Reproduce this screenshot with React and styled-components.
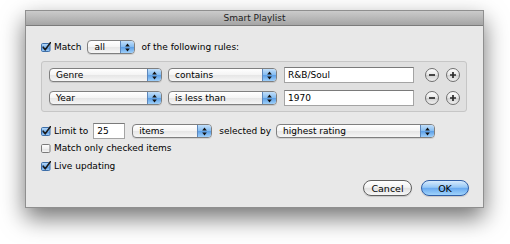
import styled, { createGlobalStyle } from "styled-components";

const GlobalStyle = createGlobalStyle`
  html, body {
    margin: 0;
    background: #fff;
  }
  body {
    font-family: "DejaVu Sans", "Liberation Sans", sans-serif;
    font-size: 9px;
    color: #000;
  }
`;

const Page = styled.div`
  width: 510px;
  height: 244px;
  padding: 10px 0 0 25px;
  box-sizing: border-box;
  overflow: hidden;
`;

const Window = styled.div`
  width: 459px;
  height: 198px;
  box-sizing: border-box;
  display: flex;
  flex-direction: column;
  background: #e8e8e8;
  border: 1px solid #8f8f8f;
  box-shadow: 0 10px 22px rgba(0, 0, 0, 0.55);
`;

const TitleBar = styled.div`
  height: 14px;
  flex: none;
  display: flex;
  align-items: center;
  justify-content: center;
  background: linear-gradient(#cbcbcb, #a5a5a5);
  border-bottom: 1px solid #7b7b7b;
  color: #1e1e1e;
`;

const Body = styled.div`
  flex: 1;
  display: flex;
  flex-direction: column;
  padding: 14px 16px 0 15px;
`;

const Row = styled.div`
  display: flex;
  align-items: center;
  height: ${(p) => p.$h || 14}px;
  margin-top: ${(p) => p.$mt || 0}px;
`;

const Label = styled.span`
  margin-left: ${(p) => p.$ml || 0}px;
  white-space: nowrap;
`;

const RulesBox = styled.div`
  margin-top: 7px;
  display: flex;
  flex-direction: column;
  gap: 7px;
  padding: 5px 8px 5px 7px;
  background: #e0e0e0;
  border: 1px solid #c6c6c6;
  border-radius: 3px;
`;

const PopupBox = styled.div`
  width: ${(p) => p.$w}px;
  height: 14px;
  flex: none;
  margin-left: ${(p) => p.$ml || 0}px;
  box-sizing: border-box;
  display: flex;
  border: 1px solid #7f7f7f;
  border-radius: 4px;
  overflow: hidden;
  background: linear-gradient(#ffffff, #f4f4f4 50%, #e6e6e6 52%, #f6f6f6);
  box-shadow: 0 1px 0 rgba(0, 0, 0, 0.1);
`;

const PopupLabel = styled.span`
  flex: 1;
  padding-left: 6px;
  line-height: 12px;
  white-space: nowrap;
  overflow: hidden;
`;

const PopupArrows = styled.span`
  width: 13px;
  flex: none;
  display: flex;
  align-items: center;
  justify-content: center;
  border-left: 1px solid #5d87bb;
  background: linear-gradient(#c2dffa, #86bdf1 48%, #5c9fe6 52%, #9fd0fa);
`;

const Field = styled.div`
  width: ${(p) => p.$w}px;
  height: 16px;
  flex: none;
  margin-left: ${(p) => p.$ml || 0}px;
  box-sizing: border-box;
  padding-left: 3px;
  line-height: 14px;
  background: #fff;
  border: 1px solid #a4a4a4;
  border-top-color: #7a7a7a;
`;

const RoundButton = styled.div`
  width: 14px;
  height: 14px;
  flex: none;
  margin-left: ${(p) => p.$ml || 0}px;
  box-sizing: border-box;
  border-radius: 50%;
  border: 1px solid #707070;
  background: linear-gradient(#fefefe, #e6e6e6 50%, #d2d2d2 52%, #efefef);
  display: flex;
  align-items: center;
  justify-content: center;
`;

const CheckWrap = styled.span`
  display: inline-flex;
  width: 10px;
  height: 10px;
  flex: none;
`;

const ButtonBar = styled.div`
  margin-top: auto;
  margin-bottom: 11px;
  margin-right: -2px;
  display: flex;
  justify-content: flex-end;
  gap: 9px;
`;

const PushButton = styled.div`
  width: ${(p) => p.$w}px;
  height: 16px;
  box-sizing: border-box;
  border-radius: 8px;
  display: flex;
  align-items: center;
  justify-content: center;
  font-size: 9.5px;
  border: 1px solid ${(p) => (p.$primary ? "#2f5ea6" : "#5f5f5f")};
  background: ${(p) =>
    p.$primary
      ? "linear-gradient(#d7ebfd, #97c8f6 45%, #6aaaf0 52%, #9fd3fb)"
      : "linear-gradient(#ffffff, #f3f3f3 45%, #e2e2e2 52%, #f7f7f7)"};
  box-shadow: 0 1px 1px rgba(0, 0, 0, 0.15);
`;

function Checkbox({ checked }) {
  return (
    <CheckWrap>
      <svg width="10" height="10" viewBox="0 0 10 10">
        <defs>
          <linearGradient id="cbBlue" x1="0" y1="0" x2="0" y2="1">
            <stop offset="0" stopColor="#bcdcfa" />
            <stop offset="0.5" stopColor="#7ab4ef" />
            <stop offset="0.55" stopColor="#5798e4" />
            <stop offset="1" stopColor="#a6d3fb" />
          </linearGradient>
          <linearGradient id="cbWhite" x1="0" y1="0" x2="0" y2="1">
            <stop offset="0" stopColor="#ffffff" />
            <stop offset="0.5" stopColor="#f0f0f0" />
            <stop offset="0.55" stopColor="#e2e2e2" />
            <stop offset="1" stopColor="#f8f8f8" />
          </linearGradient>
        </defs>
        <rect
          x="0.5"
          y="1.5"
          width="8.5"
          height="8"
          rx="1.2"
          fill={checked ? "url(#cbBlue)" : "url(#cbWhite)"}
          stroke={checked ? "#3d6ea8" : "#7a7a7a"}
        />
        {checked && (
          <path
            d="M2.2 5.2 L4.2 7.8 L9.4 0.6"
            fill="none"
            stroke="#1b1b1b"
            strokeWidth="1.6"
            strokeLinecap="round"
            strokeLinejoin="round"
          />
        )}
      </svg>
    </CheckWrap>
  );
}

function Popup({ w, ml, children }) {
  return (
    <PopupBox $w={w} $ml={ml}>
      <PopupLabel>{children}</PopupLabel>
      <PopupArrows>
        <svg width="5" height="9" viewBox="0 0 5 9">
          <path d="M2.5 0.5 L4.8 3.5 L0.2 3.5 Z" fill="#111" />
          <path d="M2.5 8.5 L4.8 5.5 L0.2 5.5 Z" fill="#111" />
        </svg>
      </PopupArrows>
    </PopupBox>
  );
}

function Minus({ ml }) {
  return (
    <RoundButton $ml={ml}>
      <svg width="8" height="8" viewBox="0 0 8 8">
        <path d="M1 4 H7" stroke="#2a2a2a" strokeWidth="1.7" />
      </svg>
    </RoundButton>
  );
}

function Plus({ ml }) {
  return (
    <RoundButton $ml={ml}>
      <svg width="8" height="8" viewBox="0 0 8 8">
        <path d="M1 4 H7 M4 1 V7" stroke="#2a2a2a" strokeWidth="1.7" />
      </svg>
    </RoundButton>
  );
}

const rules = [
  { field: "Genre", op: "contains", value: "R&B/Soul" },
  { field: "Year", op: "is less than", value: "1970" },
];

export default function App() {
  return (
    <>
      <GlobalStyle />
      <Page>
        <Window>
          <TitleBar>Smart Playlist</TitleBar>
          <Body>
            <Row>
              <Checkbox checked />
              <Label $ml={3}>Match</Label>
              <Popup w={48} ml={6}>
                all
              </Popup>
              <Label $ml={6}>of the following rules:</Label>
            </Row>
            <RulesBox>
              {rules.map((r) => (
                <Row key={r.field} $h={16}>
                  <Popup w={113}>{r.field}</Popup>
                  <Popup w={109} ml={6}>
                    {r.op}
                  </Popup>
                  <Field $w={130} $ml={7}>
                    {r.value}
                  </Field>
                  <Minus ml={11} />
                  <Plus ml={7} />
                </Row>
              ))}
            </RulesBox>
            <Row $h={16} $mt={11}>
              <Checkbox checked />
              <Label $ml={3}>Limit to</Label>
              <Field $w={32} $ml={5}>
                25
              </Field>
              <Popup w={80} ml={7}>
                items
              </Popup>
              <Label $ml={7}>selected by</Label>
              <Popup w={159} ml={5}>
                highest rating
              </Popup>
            </Row>
            <Row $mt={2}>
              <Checkbox />
              <Label $ml={3}>Match only checked items</Label>
            </Row>
            <Row $mt={4}>
              <Checkbox checked />
              <Label $ml={3}>Live updating</Label>
            </Row>
            <ButtonBar>
              <PushButton $w={49}>Cancel</PushButton>
              <PushButton $w={48} $primary>
                OK
              </PushButton>
            </ButtonBar>
          </Body>
        </Window>
      </Page>
    </>
  );
}
